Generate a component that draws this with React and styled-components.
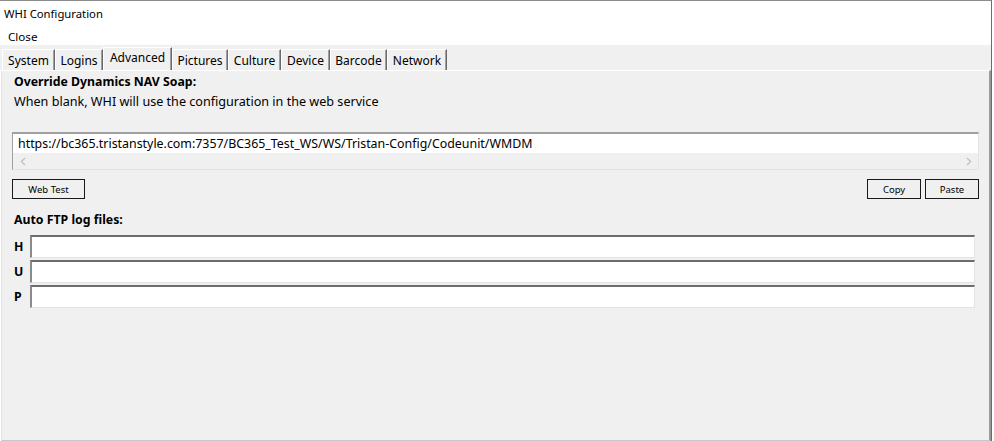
import React from "react";
import styled, { createGlobalStyle, css } from "styled-components";

const GlobalStyle = createGlobalStyle`
  html, body { margin: 0; padding: 0; background: #ffffff; }
  body { font-family: "Noto Sans", "Open Sans", sans-serif; color: #000; }
  * { box-sizing: border-box; }
`;

const Window = styled.div`
  width: 992px;
  height: 441px;
  border-top: 1px solid #8c8c8c;
  border-right: 1px solid #6b6b6b;
  display: flex;
  flex-direction: column;
  background: #ffffff;
`;

const TitleBar = styled.div`
  height: 25px;
  padding-left: 4px;
  padding-bottom: 1px;
  display: flex;
  align-items: center;
  font-size: 11.3px;
`;

const MenuBar = styled.div`
  height: 19px;
  padding-left: 8px;
  display: flex;
  align-items: center;
  font-size: 11.6px;
  padding-top: 1px;
`;

const TabStrip = styled.div`
  height: 25px;
  background: #f0f0f0;
  display: flex;
  align-items: flex-end;
  padding-left: 2px;
`;

const Tab = styled.div`
  width: ${(p) => p.$w}px;
  height: ${(p) => (p.$active ? 23 : 21)}px;
  display: flex;
  align-items: center;
  justify-content: center;
  font-size: 12px;
  white-space: nowrap;
  background: #f0f0f0;
  border-top: 1px solid #ffffff;
  border-left: 1px solid #ffffff;
  border-right: 1px solid #696969;
  box-shadow: inset -1px 0 0 #a0a0a0;
  padding-bottom: ${(p) => (p.$active ? 3 : 0)}px;
  ${(p) =>
    p.$active &&
    css`
      position: relative;
      z-index: 1;
    `}
`;

const TabPage = styled.div`
  flex: 1;
  background: #f0f0f0;
  border-top: 1px solid #ffffff;
  border-left: 1px solid #e3e3e3;
  border-right: 2px solid #9a9a9a;
  border-bottom: 1px solid #c8c8c8;
  margin-left: 1px;
  padding: 3px 0 0 10px;
  display: flex;
  flex-direction: column;
`;

const Heading = styled.div`
  font-weight: 700;
  font-size: 12.3px;
  height: 16px;
  line-height: 16px;
  padding-left: 2px;
`;

const Description = styled.div`
  font-size: 12.6px;
  height: 16px;
  line-height: 16px;
  margin-top: 4px;
  padding-left: 2px;
`;

const UrlBox = styled.div`
  margin-top: 22px;
  width: 967px;
  height: 38px;
  background: #ffffff;
  border-top: 2px solid #a0a0a0;
  border-left: 1px solid #a0a0a0;
  border-right: 1px solid #e3e3e3;
  border-bottom: 1px solid #e3e3e3;
  display: flex;
  flex-direction: column;
`;

const UrlText = styled.div`
  height: 19px;
  padding-left: 5px;
  display: flex;
  align-items: center;
  font-size: 12.4px;
  white-space: nowrap;
`;

const HScroll = styled.div`
  flex: 1;
  background: #f0f0f0;
  display: flex;
  align-items: center;
  justify-content: space-between;
  padding: 1px 5px 0 6px;
`;

const Arrow = styled.svg`
  width: 9px;
  height: 9px;
  display: block;
`;

const ButtonRow = styled.div`
  margin-top: 9px;
  width: 967px;
  display: flex;
  align-items: center;
`;

const Spacer = styled.div`
  flex: 1;
`;

const Button = styled.button`
  height: 20px;
  width: ${(p) => p.$w}px;
  margin-left: ${(p) => p.$ml || 0}px;
  padding: 0;
  border: 1px solid #1a1a1a;
  background: #f0f0f0;
  font-family: "Noto Sans", sans-serif;
  font-size: 9.5px;
  color: #000;
`;

const SubHeading = styled(Heading)`
  margin-top: 13px;
`;

const Fields = styled.div`
  margin-top: 7px;
  display: flex;
  flex-direction: column;
  gap: 2px;
`;

const FieldRow = styled.div`
  display: flex;
  align-items: center;
  height: 23px;
`;

const FieldLabel = styled.div`
  width: 18px;
  padding-left: 2px;
  font-weight: 700;
  font-size: 12.3px;
`;

const Input = styled.div`
  width: 945px;
  height: 23px;
  background: #ffffff;
  border-top: 2px solid #6d6d6d;
  border-left: 2px solid #8a8a8a;
  border-right: 1px solid #e3e3e3;
  border-bottom: 1px solid #e3e3e3;
`;

const tabs = [
  ["System", 53],
  ["Logins", 48],
  ["Advanced", 69],
  ["Pictures", 56],
  ["Culture", 53],
  ["Device", 49],
  ["Barcode", 57],
  ["Network", 60],
];

export default function App() {
  return (
    <>
      <GlobalStyle />
      <Window>
        <TitleBar>WHI Configuration</TitleBar>
        <MenuBar>Close</MenuBar>
        <TabStrip>
          {tabs.map(([t, w]) => (
            <Tab key={t} $w={w} $active={t === "Advanced"}>
              {t}
            </Tab>
          ))}
        </TabStrip>
        <TabPage>
          <Heading>Override Dynamics NAV Soap:</Heading>
          <Description>When blank, WHI will use the configuration in the web service</Description>
          <UrlBox>
            <UrlText>https://bc365.tristanstyle.com:7357/BC365_Test_WS/WS/Tristan-Config/Codeunit/WMDM</UrlText>
            <HScroll>
              <Arrow viewBox="0 0 9 9">
                <path d="M6 1 L2.5 4.5 L6 8" fill="none" stroke="#c2c2c2" strokeWidth="1.4" />
              </Arrow>
              <Arrow viewBox="0 0 9 9">
                <path d="M3 1 L6.5 4.5 L3 8" fill="none" stroke="#c2c2c2" strokeWidth="1.4" />
              </Arrow>
            </HScroll>
          </UrlBox>
          <ButtonRow>
            <Button $w={73}>Web Test</Button>
            <Spacer />
            <Button $w={54}>Copy</Button>
            <Button $w={54} $ml={4}>Paste</Button>
          </ButtonRow>
          <SubHeading>Auto FTP log files:</SubHeading>
          <Fields>
            {["H", "U", "P"].map((l) => (
              <FieldRow key={l}>
                <FieldLabel>{l}</FieldLabel>
                <Input />
              </FieldRow>
            ))}
          </Fields>
        </TabPage>
      </Window>
    </>
  );
}
